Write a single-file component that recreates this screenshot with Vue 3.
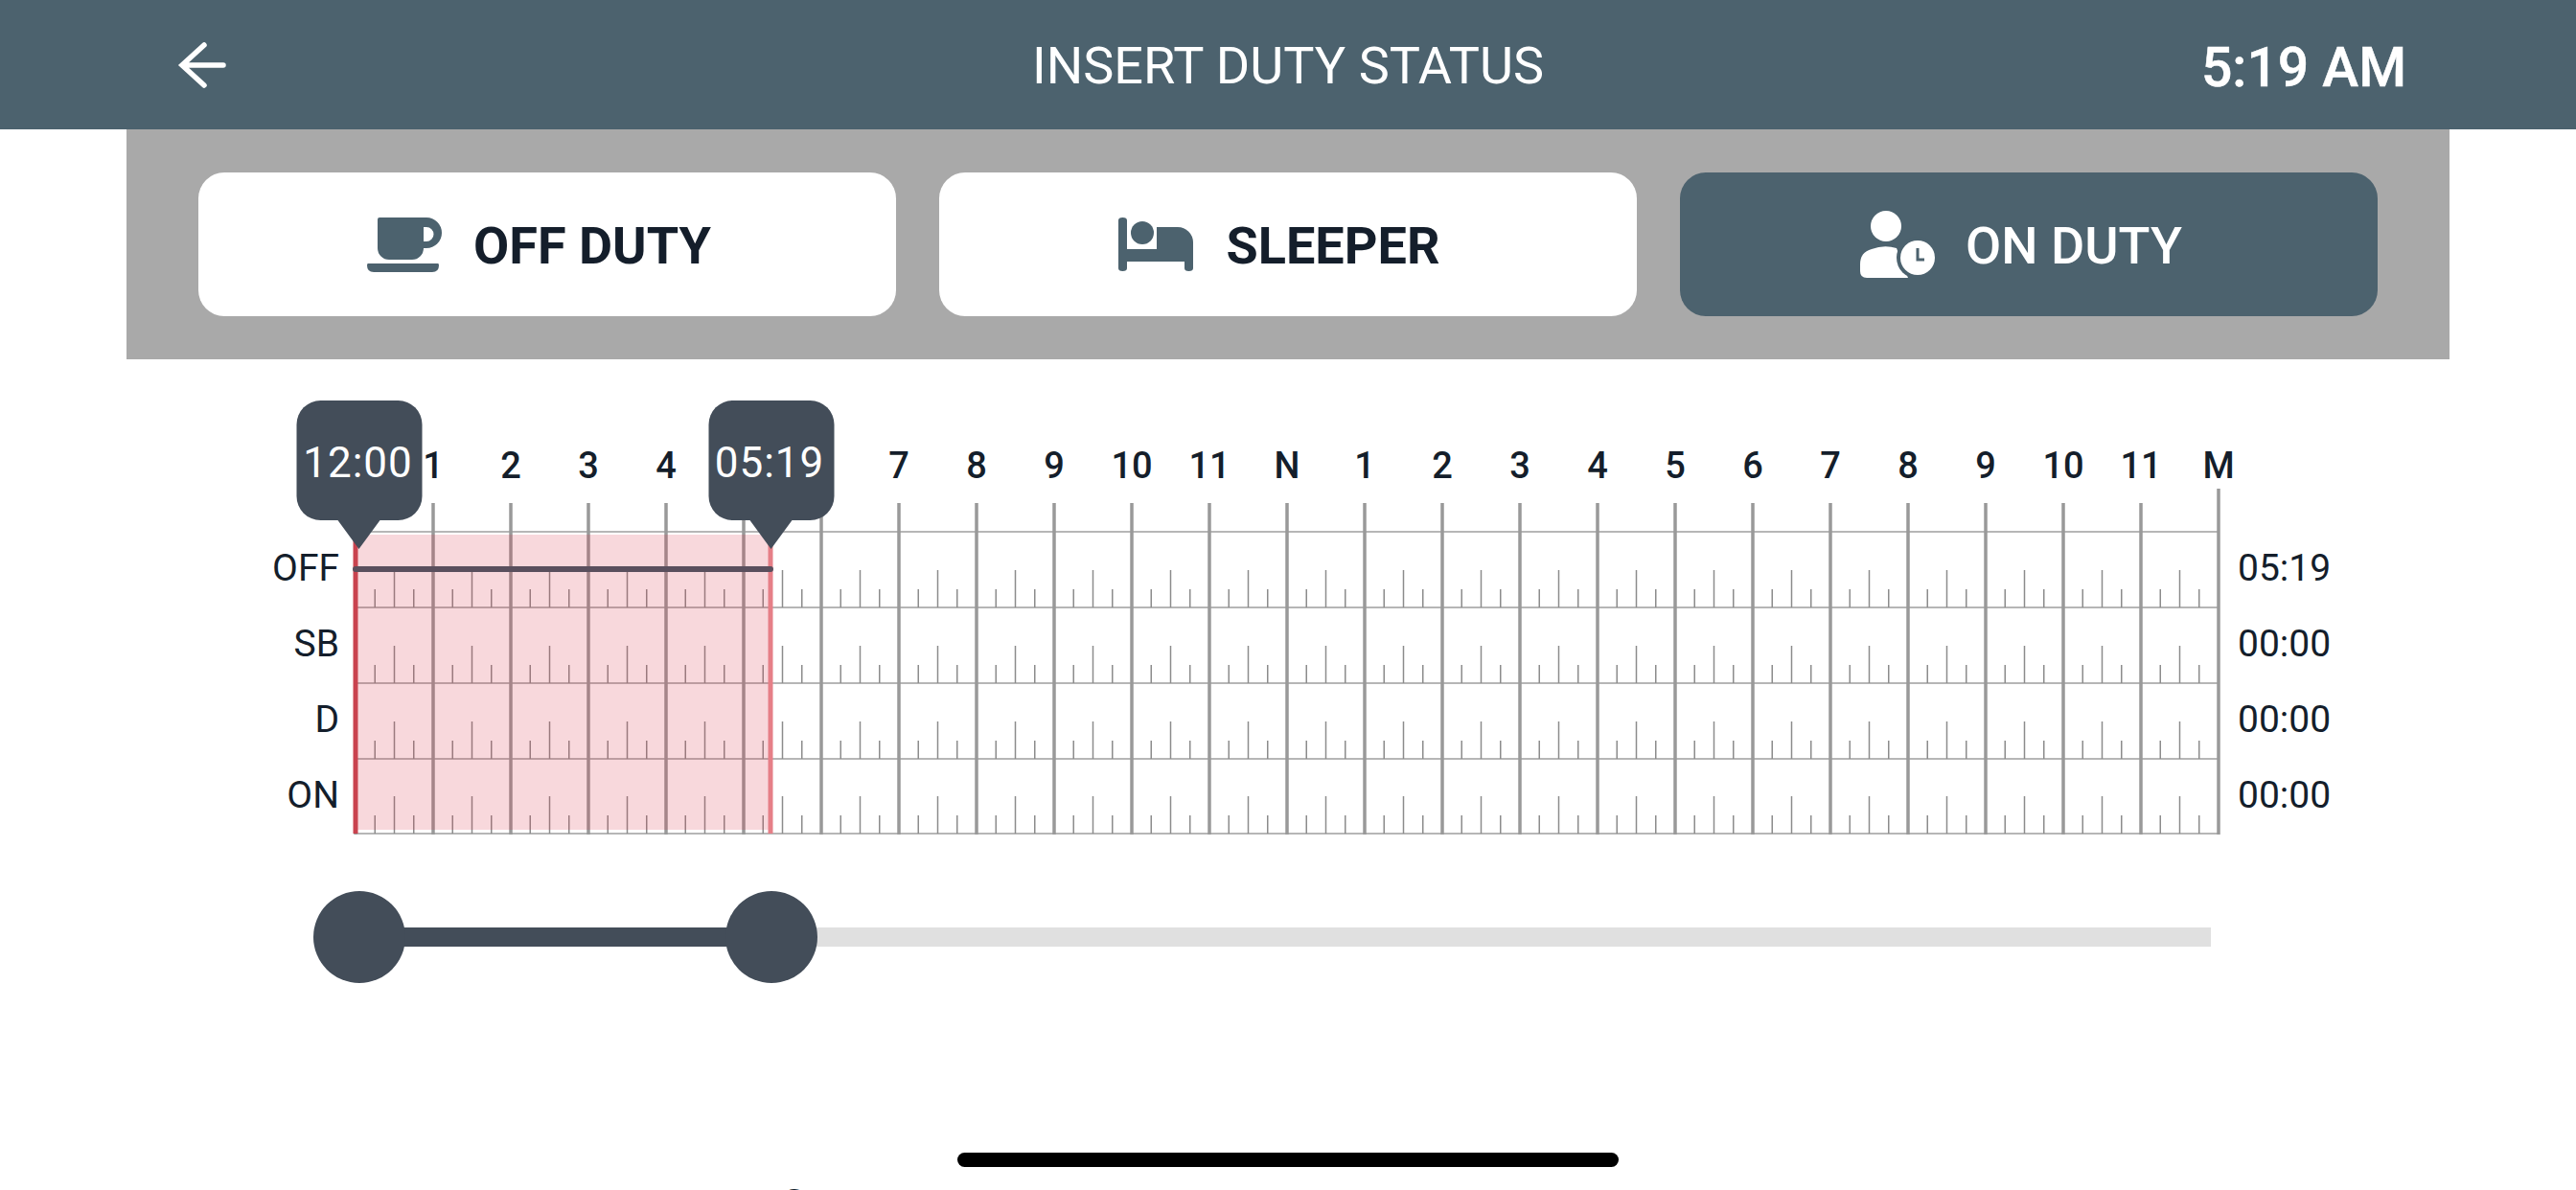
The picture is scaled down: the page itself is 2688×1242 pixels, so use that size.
<template>
  <div class="screen">
    <header class="topbar">
      <svg class="back" width="56" height="52" viewBox="0 0 56 52">
        <path d="M53 26H11M33 5L10 26L33 47" fill="none" stroke="#fff" stroke-width="5.500" stroke-linecap="round" stroke-linejoin="miter" />
      </svg>
      <div class="title">INSERT DUTY STATUS</div>
      <div class="clock">5:19 AM</div>
    </header>

    <section class="statuses">
      <button class="status">
        <svg class="status__icon" width="80" height="76" viewBox="1 0 80 76">
          <path fill="#4c626e" fill-rule="evenodd" d="M11 9Q11 7 13 7H62A16 16 0 0 1 62 39H59A12 12 0 0 1 47 51H23A12 12 0 0 1 11 39ZM59 17V32H62A7.5 7.5 0 0 0 62 17Z" />
          <path fill="#4c626e" d="M1 55H74Q75 55 75 57Q75 64 68 64H7Q0 64 0 57Q0 55 1 55Z" />
        </svg>
        <span>OFF DUTY</span>
      </button>
      <button class="status">
        <svg class="status__icon" width="80" height="76" viewBox="3 0 80 76">
          <path fill="#4c626e" d="M0 10Q0 7 4.500 7Q9 7 9 10V40H78V60Q78 63 73.500 63Q69 63 69 60V53H9V60Q9 63 4.500 63Q0 63 0 60Z" />
          <circle cx="25" cy="23" r="12" fill="#4c626e" />
          <path fill="#4c626e" d="M40 17H62A16 16 0 0 1 78 33V41H40Z" />
        </svg>
        <span>SLEEPER</span>
      </button>
      <button class="status status--active">
        <svg class="status__icon" width="80" height="76" viewBox="0 0 80 76">
          <circle cx="27" cy="16" r="16" fill="#fff" />
          <path fill="#fff" d="M7 70Q0 70 0 63V56Q0 43 12 40Q25 35 38 39L50 70Z" />
          <circle cx="60" cy="49" r="22" fill="#4c626e" />
          <circle cx="60" cy="49" r="18" fill="#fff" />
          <path d="M60 39V51H67" fill="none" stroke="#4c626e" stroke-width="3" />
        </svg>
        <span>ON DUTY</span>
      </button>
    </section>

    <section class="chart">
      <div class="hours">
        <span v-for="(label, i) in hourLabels" :key="i" class="hours__item">{{ label }}</span>
      </div>

      <div class="graph">
        <div class="graph__labels">
          <div v-for="row in rows" :key="row.name" class="graph__label">{{ row.name }}</div>
        </div>

        <svg class="graph__grid" width="1952" height="362" viewBox="0 0 1952 362">
          <line v-for="y in rowLines" :key="y" x1="3" x2="1947" :y1="y" :y2="y" stroke="#b6b6b6" stroke-width="2" />
          <line v-for="t in ticks" :key="t.key" :x1="t.x" :x2="t.x" :y1="t.top" :y2="t.bottom" :stroke="t.color" :stroke-width="t.width" />

          <rect :x="startX" y="48" :width="endX - startX" height="308" fill="rgba(220,50,70,0.19)" />
          <line :x1="startX" :x2="startX" y1="48" y2="360" stroke="#c9434f" stroke-width="5" />
          <line :x1="endX" :x2="endX" y1="48" y2="360" stroke="#e67f87" stroke-width="5" />
          <line :x1="startX" :x2="endX" y1="84" y2="84" stroke="#5a4f5d" stroke-width="6" stroke-linecap="round" />
        </svg>

        <div class="graph__totals">
          <div v-for="row in rows" :key="row.name" class="graph__label">{{ row.total }}</div>
        </div>
      </div>

      <div v-for="tip in tips" :key="tip.text" class="tip" :style="{ left: tip.left + 'px' }">{{ tip.text }}</div>
    </section>

    <section class="slider">
      <div class="slider__fill" :style="{ width: sliderEnd + 'px' }"></div>
      <div class="slider__thumb" style="left: 0"></div>
      <div class="slider__thumb" :style="{ left: sliderEnd + 'px' }"></div>
    </section>

    <div class="more">Add more fields</div>

    <div class="homebar"></div>
  </div>
</template>

<script setup>
const HOUR = 81
const hourLabels = ['M', 1, 2, 3, 4, 5, 6, 7, 8, 9, 10, 11, 'N', 1, 2, 3, 4, 5, 6, 7, 8, 9, 10, 11, 'M']

const rows = [
  { name: 'OFF', total: '05:19' },
  { name: 'SB', total: '00:00' },
  { name: 'D', total: '00:00' },
  { name: 'ON', total: '00:00' }
]

const rowLines = [45, 124, 203, 282, 360]

const startX = 3
const endX = 436
const sliderEnd = 430

const tips = [
  { text: '12:00', left: 375 },
  { text: '05:19', left: 804.5 }
]

const ticks = []
for (let h = 0; h <= 24; h++) {
  const x = 3 + HOUR * h
  ticks.push({ key: 'h' + h, x, top: h === 24 ? 0 : 15, bottom: 361, width: 3.5, color: '#999' })
  if (h === 24) break
  rowLines.slice(1).forEach((y) => {
    ticks.push({ key: `a${h}-${y}`, x: x + HOUR / 4, top: y - 19, bottom: y, width: 1.5, color: '#8c8c8c' })
    ticks.push({ key: `b${h}-${y}`, x: x + HOUR / 2, top: y - 39, bottom: y, width: 1.5, color: '#8c8c8c' })
    ticks.push({ key: `c${h}-${y}`, x: x + (HOUR * 3) / 4, top: y - 19, bottom: y, width: 1.5, color: '#8c8c8c' })
  })
}
</script>

<style>
html,
body {
  margin: 0;
  background: #fff;
  overflow: hidden;
}
</style>

<style scoped>
.screen {
  position: relative;
  width: 2688px;
  height: 1242px;
  overflow: hidden;
  background: #fff;
  color: #141e2b;
  font-family: Roboto, "Liberation Sans", sans-serif;
}

.topbar {
  height: 135px;
  padding: 0 180px;
  box-sizing: border-box;
  display: grid;
  grid-template-columns: 1fr auto 1fr;
  align-items: center;
  background: #4c626e;
  color: #fff;
}

.back {
  display: block;
}

.title {
  font-size: 54px;
  padding-top: 2px;
}

.clock {
  justify-self: end;
  margin-right: -3px;
  font-size: 57px;
  font-weight: 500;
  padding-top: 5px;
  -webkit-text-stroke: 0.5px #fff;
}

.statuses {
  margin: 0 132px;
  padding: 45px 75px;
  height: 240px;
  box-sizing: border-box;
  display: grid;
  grid-template-columns: repeat(3, 1fr);
  gap: 45px;
  background: #a9a9a9;
}

.status {
  height: 150px;
  padding: 0 16px 0 0;
  display: flex;
  align-items: center;
  justify-content: center;
  gap: 30px;
  border: 0;
  border-radius: 27px;
  background: #fff;
  color: #141e2b;
  font-family: inherit;
  font-size: 54px;
  font-weight: 700;
}

.status__icon {
  margin-top: 6px;
  overflow: visible;
}

.status span {
  padding-top: 3px;
}

.status--active {
  background: #4c626e;
  color: #fff;
  font-weight: 500;
}

.chart {
  position: relative;
  margin-top: 85px;
}

.hours {
  display: flex;
  height: 50px;
  margin-left: 330.5px;
}

.hours__item {
  width: 81px;
  text-align: center;
  font-size: 38px;
  font-weight: 500;
  line-height: 52px;
}

.graph {
  display: flex;
  margin-left: 270px;
}

.graph__labels {
  width: 84px;
  margin-right: 14px;
  padding-top: 44px;
  text-align: right;
}

.graph__grid {
  display: block;
  flex: none;
}

.graph__totals {
  margin-left: 15px;
  padding-top: 44px;
}

.graph__label {
  height: 79px;
  font-size: 39px;
  line-height: 79px;
}

.tip {
  position: absolute;
  top: -42px;
  width: 131px;
  height: 125px;
  padding-right: 3px;
  box-sizing: border-box;
  transform: translateX(-50%);
  border-radius: 25px;
  background: #434d59;
  color: #fff;
  font-size: 44px;
  letter-spacing: 1px;
  line-height: 131px;
  text-align: center;
}

.tip::after {
  content: "";
  position: absolute;
  top: 125px;
  left: 43px;
  border-left: 22.500px solid transparent;
  border-right: 22.500px solid transparent;
  border-top: 30px solid #434d59;
}

.slider {
  position: relative;
  width: 1932px;
  height: 20px;
  margin: 96px 0 0 375px;
  background: #e0e0e0;
}

.slider__fill {
  height: 100%;
  background: #434d59;
}

.slider__thumb {
  position: absolute;
  top: -38px;
  width: 96px;
  height: 96px;
  margin-left: -48px;
  border-radius: 50%;
  background: #434d59;
}

.more {
  margin: 245px 0 0 613px;
  font-size: 46px;
  font-weight: 500;
  line-height: 54px;
  word-spacing: -5px;
}

.homebar {
  position: absolute;
  left: 999px;
  bottom: 24px;
  width: 690px;
  height: 15px;
  border-radius: 8px;
  background: #000;
}
</style>
